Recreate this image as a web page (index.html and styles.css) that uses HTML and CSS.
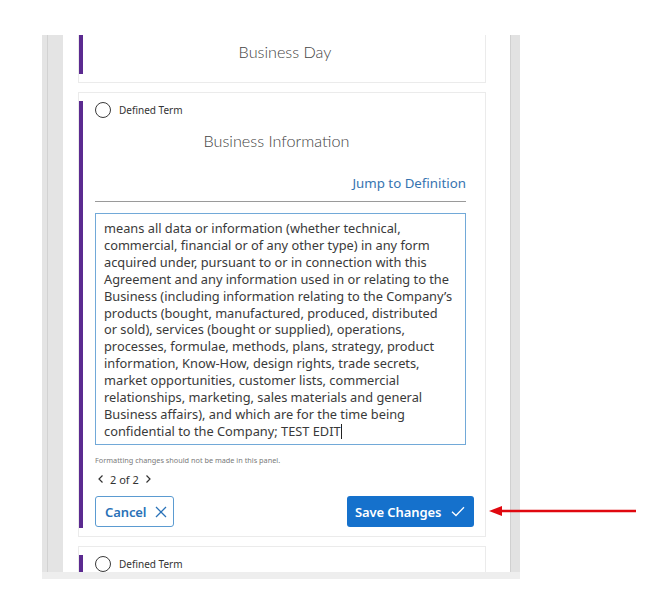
FILE: index.html
```html
<!DOCTYPE html>
<html>
<head>
<meta charset="utf-8">
<link rel="stylesheet" href="styles.css">
</head>
<body>
<div class="stage">
  <div class="panel">
    <div class="gutter-left"><div class="gutter-line"></div></div>
    <div class="scroll">
      <div class="list">
        <div class="card card-short">
          <div class="title">Business Day</div>
        </div>
        <div class="card">
          <div class="radio-row"><span class="radio"></span><span class="label">Defined Term</span></div>
          <div class="title title-main">Business Information</div>
          <div class="jump-row"><a class="jump">Jump to Definition</a></div>
          <div class="rule"></div>
          <div class="editor"><div class="line">means all data or information (whether technical,</div><div class="line">commercial, financial or of any other type) in any form</div><div class="line">acquired under, pursuant to or in connection with this</div><div class="line">Agreement and any information used in or relating to the</div><div class="line">Business (including information relating to the Company’s</div><div class="line">products (bought, manufactured, produced, distributed</div><div class="line">or sold), services (bought or supplied), operations,</div><div class="line">processes, formulae, methods, plans, strategy, product</div><div class="line">information, Know-How, design rights, trade secrets,</div><div class="line">market opportunities, customer lists, commercial</div><div class="line">relationships, marketing, sales materials and general</div><div class="line">Business affairs), and which are for the time being</div><div class="line">confidential to the Company; TEST EDIT<span class="caret"></span></div></div>
          <div class="note">Formatting changes should not be made in this panel.</div>
          <div class="pager">
            <svg class="chev" width="8" height="10" viewBox="0 0 8 10"><path d="M5.5 1.5 L2 5 L5.5 8.5" fill="none" stroke="#333" stroke-width="1.2"/></svg>
            <span>2 of 2</span>
            <svg class="chev" width="8" height="10" viewBox="0 0 8 10"><path d="M2.5 1.5 L6 5 L2.5 8.5" fill="none" stroke="#333" stroke-width="1.2"/></svg>
          </div>
          <div class="actions">
            <button class="btn btn-cancel"><span>Cancel</span><svg class="ico" width="12" height="12" viewBox="0 0 12 12"><path d="M1 1 L11 11 M11 1 L1 11" stroke="#2a72b8" stroke-width="1.3" fill="none"/></svg></button>
            <button class="btn btn-save"><span>Save Changes</span><svg class="ico" width="14" height="11" viewBox="0 0 14 11"><path d="M1 5.8 L5 9.5 L13 1.2" stroke="#fff" stroke-width="1.3" fill="none"/></svg></button>
          </div>
        </div>
        <div class="card">
          <div class="radio-row"><span class="radio"></span><span class="label">Defined Term</span></div>
          <div class="spacer"></div>
        </div>
      </div>
    </div>
    <div class="gutter-right"></div>
  </div>
  <div class="hbar"></div>
  <svg class="arrow" width="152" height="16" viewBox="0 0 152 16">
    <line x1="12" y1="8" x2="148" y2="8" stroke="#e0080f" stroke-width="2.6"/>
    <polygon points="1,8 14,3 14,13" fill="#e0080f"/>
  </svg>
</div>
</body>
</html>
```

FILE: styles.css
```css
* { box-sizing: border-box; }
html, body { margin: 0; padding: 0; background: #fff; }
body { font-family: "Noto Sans", "Open Sans", sans-serif; color: #333; }

.stage {
  position: relative;
  width: 661px;
  height: 593px;
  padding-top: 35px;
  padding-left: 42px;
}

.panel {
  display: grid;
  grid-template-columns: 21px 1fr 10px;
  width: 478px;
  height: 537px;
}

.gutter-left {
  background: #e4e4e4;
  display: flex;
  padding-left: 5px;
}
.gutter-line { width: 1px; background: #d2d2d2; }

.gutter-right {
  background: #e2e2e2;
  border-left: 1px solid #d0d0d0;
}

.hbar {
  width: 478px;
  height: 7px;
  background: #eeeeee;
}

.scroll {
  overflow: hidden;
  background: #fff;
  padding: 0 24px 0 15px;
}

.list {
  margin-top: -13px;
  display: flex;
  flex-direction: column;
  gap: 9px;
}

.card {
  position: relative;
  background: #fff;
  border: 1px solid #ebebeb;
  padding: 9px 19px 9px 16px;
}
.card::before {
  content: "";
  position: absolute;
  left: 0;
  top: 8px;
  bottom: 8px;
  width: 4px;
  background: #5b2a90;
}

.card-short { padding-top: 17px; padding-bottom: 18px; }

.title {
  text-align: center;
  font-family: "Lato", "Noto Sans", sans-serif;
  font-size: 16.2px;
  line-height: 24px;
  font-weight: 300;
  color: #444;
  padding-left: 9px;
}

.radio-row {
  display: flex;
  align-items: center;
  height: 16px;
  gap: 8px;
}
.radio {
  width: 16px;
  height: 16px;
  border: 1.4px solid #3a3a3a;
  border-radius: 50%;
  flex: none;
}
.label { font-size: 10px; color: #333; }

.title-main { margin-top: 11px; padding-left: 0; margin-right: 8px; }

.jump-row {
  margin-top: 20px;
  display: flex;
  justify-content: flex-end;
  height: 20px;
  align-items: center;
}
.jump { font-size: 13.3px; color: #3674b0; }

.rule {
  margin-top: 8px;
  height: 1px;
  background: #9a9a9a;
}

.editor {
  margin-top: 11px;
  height: 232px;
  border: 1.5px solid #72a9d8;
  padding: 6px 8px 0 8px;
  font-size: 12.8px;
  line-height: 16.9px;
  color: #3a3a3a;
  white-space: nowrap;
  overflow: hidden;
}
.caret {
  display: inline-block;
  width: 1px;
  height: 15px;
  background: #222;
  vertical-align: -3px;
}

.note {
  margin-top: 10px;
  font-size: 7.3px;
  line-height: 10px;
  color: #7a7a7a;
}

.pager {
  margin-top: 6px;
  display: flex;
  align-items: center;
  gap: 5px;
  height: 16px;
  padding-left: 2px;
  font-size: 11px;
  color: #333;
}

.actions {
  margin-top: 9px;
  margin-right: -8px;
  display: flex;
  justify-content: space-between;
}

.btn {
  height: 31px;
  border-radius: 3px;
  font-family: "Noto Sans", "Open Sans", sans-serif;
  font-size: 13px;
  font-weight: 600;
  letter-spacing: -0.1px;
  white-space: nowrap;
  display: flex;
  align-items: center;
  cursor: pointer;
}
.ico { flex: none; }
.btn-cancel {
  width: 79px;
  background: #fff;
  border: 1.3px solid #5b9bd1;
  color: #2a72b8;
  padding: 0 0 0 9px;
  gap: 9px;
}
.btn-save {
  width: 127px;
  background: #1571cc;
  border: none;
  color: #fff;
  padding: 0 0 0 8px;
  gap: 10px;
}

.spacer { height: 30px; }

.arrow {
  position: absolute;
  left: 488px;
  top: 503px;
}
```
